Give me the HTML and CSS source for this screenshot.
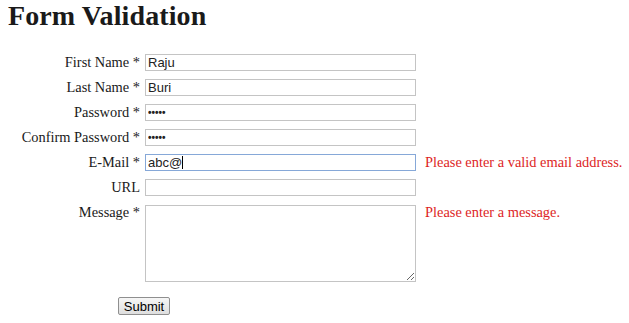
FILE: index.html
```html
<!doctype html>
<html lang="en">

<head>
    <title>Form Validation</title>
    <meta charset="UTF-8" />
    <meta name="viewport" content="width=device-width, initial-scale=1" />
    <link rel="stylesheet" href="styles.css">
</head>

<body>
    <h1>Form Validation</h1>

    <form id="signup" class="form">
        <div class="fields">
            <label class="lbl" for="fname">First Name *</label>
            <input type="text" id="fname" value="Raju" />
            <span class="err"></span>

            <label class="lbl" for="lname">Last Name *</label>
            <input type="text" id="lname" value="Buri" />
            <span class="err"></span>

            <label class="lbl" for="pass">Password *</label>
            <input type="password" id="pass" value="12345" />
            <span class="err"></span>

            <label class="lbl" for="cpass">Confirm Password *</label>
            <input type="password" id="cpass" value="12345" />
            <span class="err"></span>

            <label class="lbl" for="email">E-Mail *</label>
            <div class="focus-wrap">
                <input type="text" id="email" class="focused" value="abc@" />
                <span class="caret"></span>
            </div>
            <span class="err">Please enter a valid email address.</span>

            <label class="lbl" for="url">URL</label>
            <input type="text" id="url" value="" />
            <span class="err"></span>

            <label class="lbl top" for="msg">Message *</label>
            <textarea id="msg"></textarea>
            <span class="err top">Please enter a message.</span>
        </div>

        <div class="actions">
            <input type="submit" value="Submit" id="sub" />
        </div>
    </form>
</body>

</html>
```

FILE: styles.css
```css
body {
    font-family: "Liberation Serif", "Times New Roman", serif;
    font-size: 14.4px;
    color: #1a1a1a;
    background: #fff;
    margin: 0;
    padding: 0 8px;
}

h1 {
    font-size: 28px;
    font-weight: 700;
    margin: 0;
    line-height: 32px;
    letter-spacing: 0.1px;
}

.form {
    margin-top: 22px;
}

.fields {
    display: grid;
    grid-template-columns: 132px 271px auto;
    column-gap: 5px;
    row-gap: 8px;
    align-items: center;
}

.lbl {
    text-align: right;
    white-space: nowrap;
    line-height: 17px;
}

.lbl.top,
.err.top {
    align-self: start;
    line-height: 17px;
}

.err {
    color: #dd1f26;
    margin-left: 4px;
    white-space: nowrap;
    line-height: 17px;
}

input[type="text"],
input[type="password"],
textarea {
    box-sizing: border-box;
    width: 271px;
    height: 17px;
    margin: 0;
    padding: 0 2px;
    border: 1px solid #c4c4c4;
    font-family: "Liberation Sans", Arial, sans-serif;
    font-size: 13px;
    color: #222;
    outline: none;
}

input[type="password"] {
    font-size: 10px;
    font-weight: 700;
}

textarea {
    height: 77px;
    margin-top: 1px;
    resize: both;
}

.focus-wrap {
    position: relative;
    height: 17px;
}

.focused {
    border-color: #86a8d8 !important;
}

.caret {
    position: absolute;
    left: 37px;
    top: 2px;
    width: 1px;
    height: 13px;
    background: #000;
}

.actions {
    padding-left: 110px;
    margin-top: 15px;
}

input[type="submit"] {
    box-sizing: border-box;
    width: 52px;
    height: 18px;
    margin: 0;
    padding: 0;
    font-family: "Liberation Sans", Arial, sans-serif;
    font-size: 13px;
    color: #000;
    background: linear-gradient(#f6f6f6, #dedede);
    border: 1px solid #8f8f8f;
    border-radius: 2px;
    cursor: pointer;
}
```
